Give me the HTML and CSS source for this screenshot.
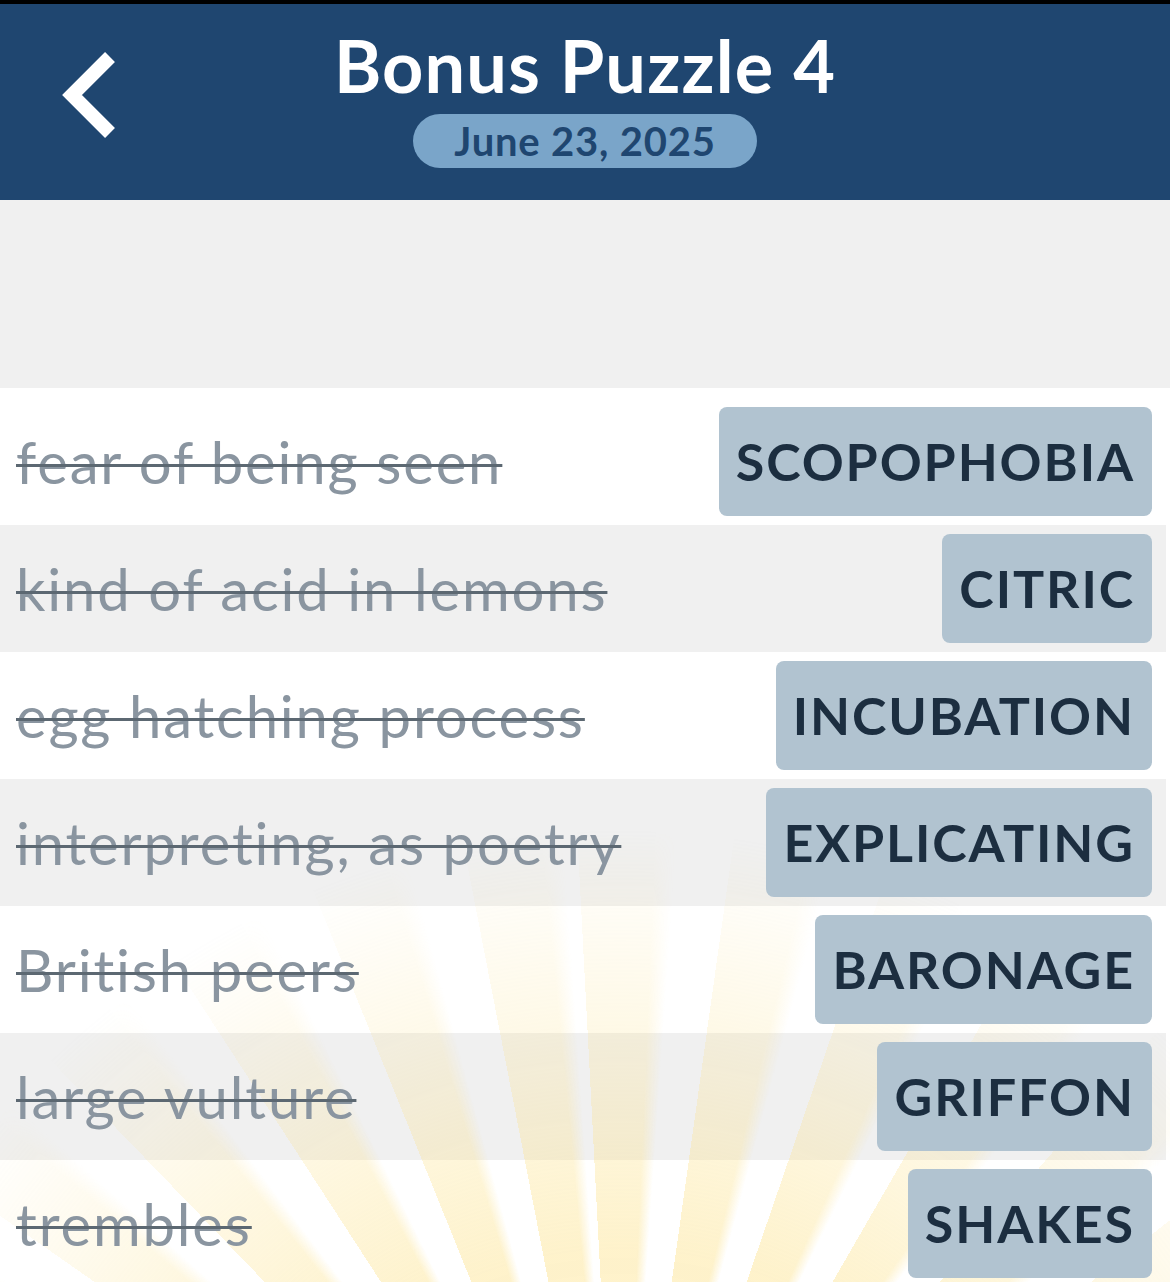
FILE: index.html
```html
<!DOCTYPE html>
<html>
<head>
<meta charset="utf-8">
<link rel="stylesheet" href="styles.css">
</head>
<body>
<div class="topstrip"></div>
<header class="header">
  <button class="back" aria-label="Back">
    <svg width="60" height="90" viewBox="55 50 60 90"><polyline points="110,57 72,95 110,133" fill="none" stroke="#fff" stroke-width="14" stroke-linejoin="miter" stroke-linecap="butt"/></svg>
  </button>
  <div class="titles">
    <h1 class="title">Bonus Puzzle 4</h1>
    <div class="date">June 23, 2025</div>
  </div>
</header>
<div class="spacer"></div>
<main class="list">
  <div class="rays"></div>
  <div class="row white"><span class="clue">fear of being seen</span><span class="tile">SCOPOPHOBIA</span></div>
  <div class="row gray"><span class="clue">kind of acid in lemons</span><span class="tile">CITRIC</span></div>
  <div class="row white"><span class="clue">egg hatching process</span><span class="tile">INCUBATION</span></div>
  <div class="row gray"><span class="clue">interpreting, as poetry</span><span class="tile">EXPLICATING</span></div>
  <div class="row white"><span class="clue">British peers</span><span class="tile">BARONAGE</span></div>
  <div class="row gray"><span class="clue">large vulture</span><span class="tile">GRIFFON</span></div>
  <div class="row white"><span class="clue">trembles</span><span class="tile">SHAKES</span></div>
</main>
</body>
</html>
```
FILE: styles.css
```css
* { box-sizing: border-box; }
html, body { margin: 0; padding: 0; }
body {
  width: 1170px;
  height: 1282px;
  overflow: hidden;
  background: #ffffff;
  font-family: Lato, "Open Sans", sans-serif;
}
.topstrip { height: 4px; background: #000; }
.header {
  height: 196px;
  background: #1f4670;
  position: relative;
  display: flex;
  justify-content: center;
}
.back {
  position: absolute;
  left: 55px;
  top: 46px;
  width: 60px;
  height: 90px;
  padding: 0;
  border: 0;
  background: none;
}
.back svg { display: block; }
.titles {
  display: flex;
  flex-direction: column;
  align-items: center;
}
.title {
  margin: 18px 0 0;
  color: #fff;
  font-size: 72px;
  font-weight: 700;
  line-height: 86px;
  letter-spacing: 1.2px;
}
.date {
  margin-top: 6px;
  width: 344px;
  height: 54px;
  border-radius: 27px;
  background: #7aa5c9;
  color: #1f4670;
  font-size: 40px;
  font-weight: 700;
  line-height: 54px;
  letter-spacing: 0.8px;
  text-align: center;
}
.spacer { height: 188px; background: #f0f0f0; }
.list {
  position: relative;
  padding-top: 10px;
  background: #fff;
}
.rays {
  position: absolute;
  inset: 0;
  pointer-events: none;
  z-index: 1;
  background: repeating-conic-gradient(from -3deg at 620px 1262px, rgba(252, 226, 140, 0.5) 0deg 5.5deg, rgba(252, 226, 140, 0) 7deg 11deg);
  -webkit-mask-image: radial-gradient(circle at 620px 1262px, #000 0px, rgba(0,0,0,0.9) 400px, rgba(0,0,0,0) 820px);
  mask-image: radial-gradient(circle at 620px 1262px, #000 0px, rgba(0,0,0,0.9) 400px, rgba(0,0,0,0) 820px);
}
.row {
  height: 127px;
  display: flex;
  align-items: center;
  justify-content: space-between;
  padding: 0 18px 0 16px;
  margin-right: 4px;
}
.row.gray { background: #f0f0f0; }
.row.white { background: #fff; }
.clue {
  position: relative;
  z-index: 2;
  color: #8a95a0;
  font-size: 58px;
  font-weight: 400;
  letter-spacing: 1.85px;
  text-decoration: line-through;
  text-decoration-color: #5c6872;
  text-decoration-thickness: 3px;
  white-space: nowrap;
}
.tile {
  position: relative;
  z-index: 2;
  height: 109px;
  padding: 0 17px;
  margin-right: -4px;
  border-radius: 8px;
  background: #b1c3d0;
  color: #1c2e40;
  font-size: 52px;
  font-weight: 700;
  line-height: 109px;
  letter-spacing: 1.9px;
  white-space: nowrap;
}
```
